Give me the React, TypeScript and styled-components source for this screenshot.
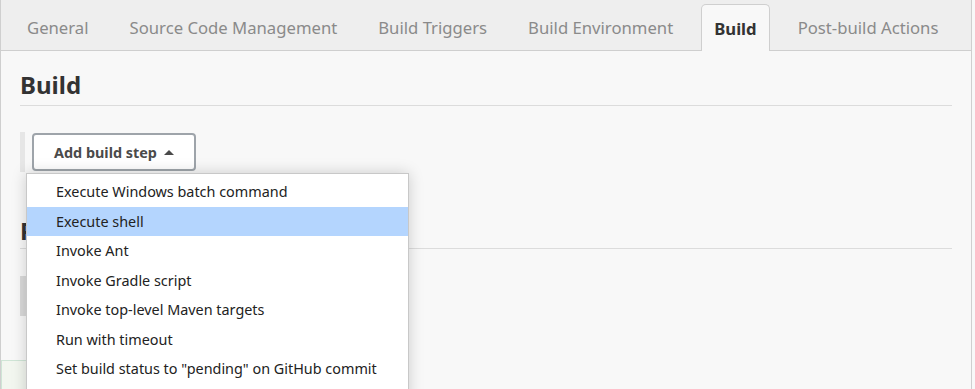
import React from "react";
import styled, { createGlobalStyle } from "styled-components";

const Global = createGlobalStyle`
  html, body { margin: 0; padding: 0; background: #f8f8f8; }
  body { font-family: "Noto Sans", "Open Sans", sans-serif; overflow: hidden; }
  * { box-sizing: border-box; }
`;

const Frame = styled.div`
  position: relative;
  width: 972px;
  height: 389px;
  border-left: 1px solid #cfcfcf;
  border-right: 1px solid #cfcfcf;
  background: #f8f8f8;
  overflow: hidden;
`;

const TabBar = styled.div`
  display: flex;
  align-items: flex-end;
  gap: 15px;
  height: 51px;
  padding: 4px 0 0 13px;
  background: #eeeeee;
  border-bottom: 1px solid #cfcfcf;
`;

const Tab = styled.div<{ $active?: boolean }>`
  height: ${(p) => (p.$active ? "47px" : "46px")};
  margin-bottom: ${(p) => (p.$active ? "-1px" : "0")};
  padding: 0 12px;
  display: flex;
  align-items: center;
  font-size: 16.7px;
  white-space: nowrap;
  color: ${(p) => (p.$active ? "#333" : "#8a8a8a")};
  font-weight: ${(p) => (p.$active ? 700 : 400)};
  background: ${(p) => (p.$active ? "#f8f8f8" : "transparent")};
  border: 1px solid ${(p) => (p.$active ? "#cfcfcf" : "transparent")};
  border-bottom: none;
  border-radius: 5px 5px 0 0;
`;

const Body = styled.div`
  padding: 0 19px;
`;

const SectionTitle = styled.h2`
  margin: 0;
  padding-top: 19px;
  height: 55px;
  font-size: 24px;
  line-height: 30px;
  font-weight: 700;
  color: #333;
  border-bottom: 1px solid #dcdcdc;
`;

const SecondTitle = styled(SectionTitle)`
  margin-top: 22px;
  height: 55px;
  padding-top: 22px;
`;

const StepRow = styled.div`
  display: flex;
  align-items: center;
  margin-top: 26px;
  height: 40px;
  border-left: 5px solid #e6e6e6;
  padding-left: 7px;
`;

const AddButton = styled.button`
  display: flex;
  align-items: center;
  gap: 7px;
  height: 38px;
  width: 164px;
  padding: 0 0 0 20px;
  background: #fff;
  border: 2px solid #9ea4aa;
  border-radius: 4px;
  font-family: inherit;
  font-size: 14.4px;
  font-weight: 700;
  color: #4a4a4a;
`;

const Caret = styled.span`
  width: 0;
  height: 0;
  border-left: 5px solid transparent;
  border-right: 5px solid transparent;
  border-bottom: 5px solid #4a4a4a;
`;

const GrayButton = styled.div`
  margin-top: 27px;
  width: 180px;
  height: 40px;
  background: #dadada;
`;

const Footer = styled.div`
  position: absolute;
  left: 0;
  bottom: -10px;
  width: 400px;
  height: 39px;
  background: #f2f6ef;
  border: 1px solid #cfe5d6;
`;

const Menu = styled.ul`
  position: absolute;
  left: 25px;
  top: 173px;
  width: 383px;
  height: 240px;
  margin: 0;
  padding: 3px 0 0;
  list-style: none;
  background: #fff;
  border: 1px solid #c8c8c8;
  box-shadow: 0 0 14px rgba(0, 0, 0, 0.18);
`;

const MenuItem = styled.li<{ $hl?: boolean }>`
  height: 29.5px;
  display: flex;
  align-items: center;
  padding-left: 29px;
  font-size: 14.4px;
  color: #222;
  white-space: nowrap;
  background: ${(p) => (p.$hl ? "#b4d5fe" : "transparent")};
`;

const tabs = [
  "General",
  "Source Code Management",
  "Build Triggers",
  "Build Environment",
  "Build",
  "Post-build Actions",
];

const items = [
  "Execute Windows batch command",
  "Execute shell",
  "Invoke Ant",
  "Invoke Gradle script",
  "Invoke top-level Maven targets",
  "Run with timeout",
  'Set build status to "pending" on GitHub commit',
];

export default function App() {
  return (
    <Frame>
      <Global />
      <TabBar>
        {tabs.map((t) => (
          <Tab key={t} $active={t === "Build"}>
            {t}
          </Tab>
        ))}
      </TabBar>
      <Body>
        <SectionTitle>Build</SectionTitle>
        <StepRow>
          <AddButton>
            Add build step <Caret />
          </AddButton>
        </StepRow>
        <SecondTitle>Post-build Actions</SecondTitle>
        <GrayButton />
      </Body>
      <Footer />
      <Menu>
        {items.map((i) => (
          <MenuItem key={i} $hl={i === "Execute shell"}>
            {i}
          </MenuItem>
        ))}
      </Menu>
    </Frame>
  );
}
